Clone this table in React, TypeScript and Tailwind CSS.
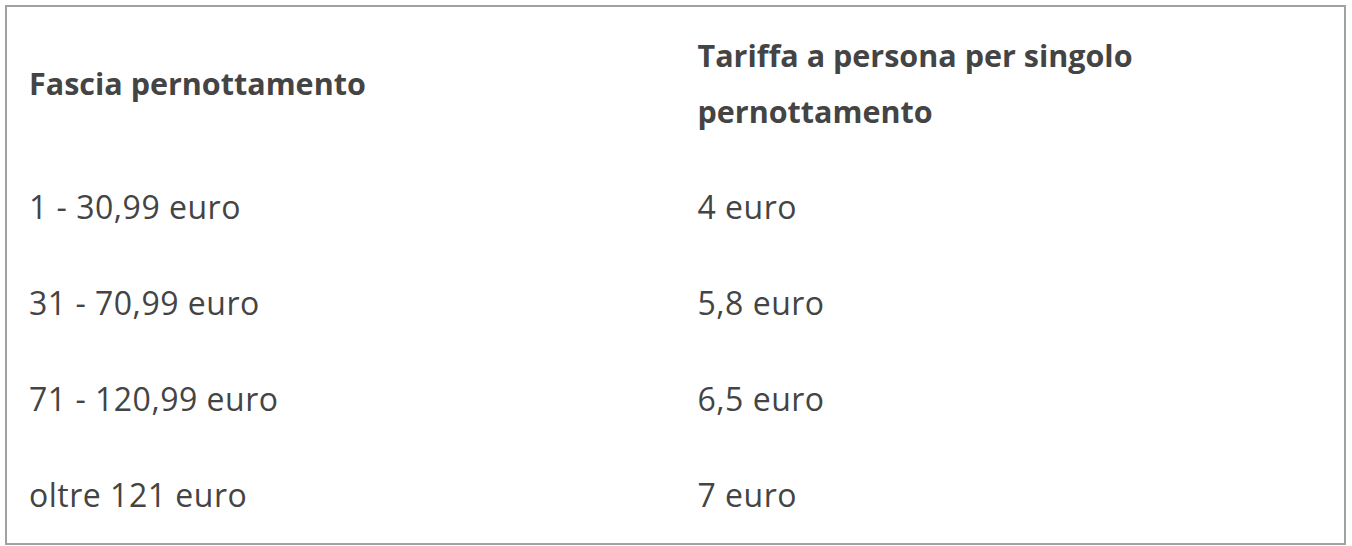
import React from "react";

const rows = [
  ["1 - 30,99 euro", "4 euro"],
  ["31 - 70,99 euro", "5,8 euro"],
  ["71 - 120,99 euro", "6,5 euro"],
  ["oltre 121 euro", "7 euro"],
];

export default function App() {
  return (
    <div className="w-[1352px] h-[546px] bg-white p-[5px]" style={{ fontFamily: "'Open Sans', Lato, sans-serif" }}>
      <table className="w-[1341px] border-collapse border-2 border-[#9ca3a2] text-[#444444] leading-[56px] table-fixed">
        <thead>
          <tr>
            <th className="w-1/2 text-left font-bold text-[30.5px] px-[22px] py-[20px] align-middle">Fascia pernottamento</th>
            <th className="w-1/2 text-left font-bold text-[30.5px] px-[22px] py-[20px] align-middle">Tariffa a persona per singolo pernottamento</th>
          </tr>
        </thead>
        <tbody>
          {rows.map(([a, b]) => (
            <tr key={a}>
              <td className="px-[22px] py-[20px] text-[32px] tracking-[0.5px]">{a}</td>
              <td className="px-[22px] py-[20px] text-[32px] tracking-[0.5px]">{b}</td>
            </tr>
          ))}
        </tbody>
      </table>
    </div>
  );
}
